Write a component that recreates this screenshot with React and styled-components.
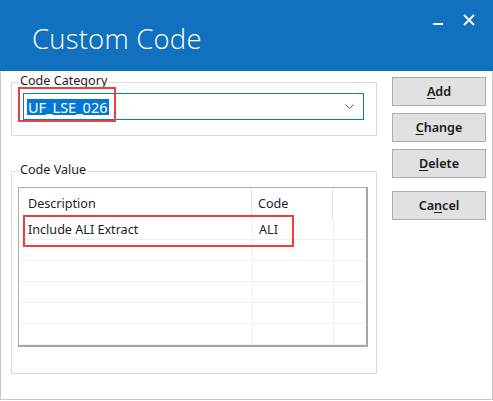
import React from "react";
import styled, { createGlobalStyle } from "styled-components";

const Global = createGlobalStyle`
  html, body { margin: 0; padding: 0; background: #fff; }
  body { font-family: "Noto Sans", "Open Sans", sans-serif; }
`;

const Window = styled.div`
  width: 493px;
  height: 400px;
  display: flex;
  flex-direction: column;
  background: #fff;
  box-sizing: border-box;
`;

const TitleBar = styled.div`
  height: 71px;
  flex: none;
  background: #1171bf;
  display: flex;
  align-items: flex-start;
  justify-content: space-between;
  color: #fff;
`;

const Title = styled.div`
  font-family: "Open Sans", "Noto Sans", sans-serif;
  font-weight: 300;
  font-size: 27.5px;
  line-height: 36px;
  padding: 21px 0 0 32px;
  letter-spacing: 0.2px;
`;

const Controls = styled.div`
  display: flex;
  align-items: center;
  gap: 20px;
  padding: 14px 18px 0 0;
`;

const Body = styled.div`
  flex: 1;
  display: flex;
  gap: 15px;
  padding: 6px 0 0 10px;
  border: 1px solid #c9c9c9;
  border-top: none;
`;

const LeftCol = styled.div`
  width: 366px;
  padding-top: 5px;
  display: flex;
  flex-direction: column;
  gap: 35px;
`;

const Group = styled.div`
  position: relative;
  box-sizing: border-box;
  height: ${(p) => p.$h}px;
  border: 1px solid #dcdcdc;
  padding: ${(p) => p.$pad};
`;

const GroupLabel = styled.span`
  position: absolute;
  left: 7px;
  top: -9px;
  padding: 0 1px;
  background: #fff;
  font-size: 12.6px;
  line-height: 14px;
  color: #1e1e1e;
`;

const Highlight = styled.div`
  position: absolute;
  left: ${(p) => p.$l}px;
  top: ${(p) => p.$t}px;
  width: ${(p) => p.$w}px;
  height: ${(p) => p.$h}px;
  box-sizing: border-box;
  border: 2px solid #e8413d;
  pointer-events: none;
`;

const Combo = styled.div`
  box-sizing: border-box;
  width: 341px;
  height: 27px;
  border: 1px solid #0a78d5;
  display: flex;
  align-items: center;
  justify-content: space-between;
  padding: 0 9px 0 3px;
  background: #fff;
`;

const Selected = styled.span`
  background: #0078d7;
  color: #fff;
  font-size: 14.5px;
  line-height: 16px;
  padding: 0 1px;
`;

const DataGrid = styled.div`
  box-sizing: border-box;
  width: 350px;
  height: 160px;
  border-top: 1px solid #a9adb3;
  border-left: 1px solid #a9adb3;
  border-right: 2px solid #a3a7ad;
  border-bottom: 2px solid #a3a7ad;
  display: flex;
  flex-direction: column;
`;

const Row = styled.div`
  display: grid;
  grid-template-columns: 233px 81px 1fr;
  height: ${(p) => (p.$header ? 31 : 21)}px;
  box-sizing: border-box;
  border-bottom: ${(p) => (p.$header ? "none" : "1px solid #f0f0f0")};
  margin: ${(p) => (p.$header ? "0" : "0 1px")};
`;

const Cell = styled.div`
  display: flex;
  align-items: center;
  padding-left: ${(p) => p.$pad}px;
  font-size: 12.6px;
  color: #1e1e1e;
  white-space: nowrap;
  border-right: 1px solid ${(p) => (p.$header ? "#e5e5e5" : "#f0f0f0")};
  &:last-child { border-right: none; }
`;

const RightCol = styled.div`
  width: 94px;
  display: flex;
  flex-direction: column;
  gap: 7px;
`;

const Button = styled.button`
  box-sizing: border-box;
  height: 29px;
  width: 94px;
  margin-top: ${(p) => (p.$extra ? 6 : 0)}px;
  background: #e1e1e1;
  border: 1px solid #adadad;
  font-family: "Noto Sans", "Open Sans", sans-serif;
  font-weight: 600;
  font-size: 12.6px;
  color: #1a1a1a;
  padding: 0;
  u { text-decoration: underline; text-underline-offset: 2px; }
`;

const rows = [["Include ALI Extract", "ALI"], ["", ""], ["", ""], ["", ""], ["", ""], ["", ""]];

export default function App() {
  return (
    <>
      <Global />
      <Window>
        <TitleBar>
          <Title>Custom Code</Title>
          <Controls>
            <svg width="10" height="12" viewBox="0 0 10 12">
              <rect x="0" y="9" width="10" height="2" fill="#fff" />
            </svg>
            <svg width="12" height="12" viewBox="0 0 12 12">
              <path d="M1 1 L11 11 M11 1 L1 11" stroke="#fff" strokeWidth="1.8" />
            </svg>
          </Controls>
        </TitleBar>
        <Body>
          <LeftCol>
            <Group $h={54} $pad="10px 0 0 11px">
              <GroupLabel>Code Category</GroupLabel>
              <Combo>
                <Selected>UF_LSE_026</Selected>
                <svg width="9" height="5" viewBox="0 0 9 5">
                  <path d="M0.5 0.5 L4.5 4.5 L8.5 0.5" stroke="#5f5f5f" strokeWidth="1" fill="none" />
                </svg>
              </Combo>
              <Highlight $l={6} $t={4} $w={98} $h={35} />
            </Group>
            <Group $h={203} $pad="15px 0 0 6px">
              <GroupLabel>Code Value</GroupLabel>
              <DataGrid>
                <Row $header>
                  <Cell $header $pad={9}>Description</Cell>
                  <Cell $header $pad={6}>Code</Cell>
                  <Cell $header />
                </Row>
                {rows.map((r, i) => (
                  <Row key={i}>
                    <Cell $pad={8}>{r[0]}</Cell>
                    <Cell $pad={6}>{r[1]}</Cell>
                    <Cell />
                  </Row>
                ))}
              </DataGrid>
              <Highlight $l={11} $t={43} $w={271} $h={32} />
            </Group>
          </LeftCol>
          <RightCol>
            <Button><u>A</u>dd</Button>
            <Button><u>C</u>hange</Button>
            <Button><u>D</u>elete</Button>
            <Button $extra>Ca<u>n</u>cel</Button>
          </RightCol>
        </Body>
      </Window>
    </>
  );
}
